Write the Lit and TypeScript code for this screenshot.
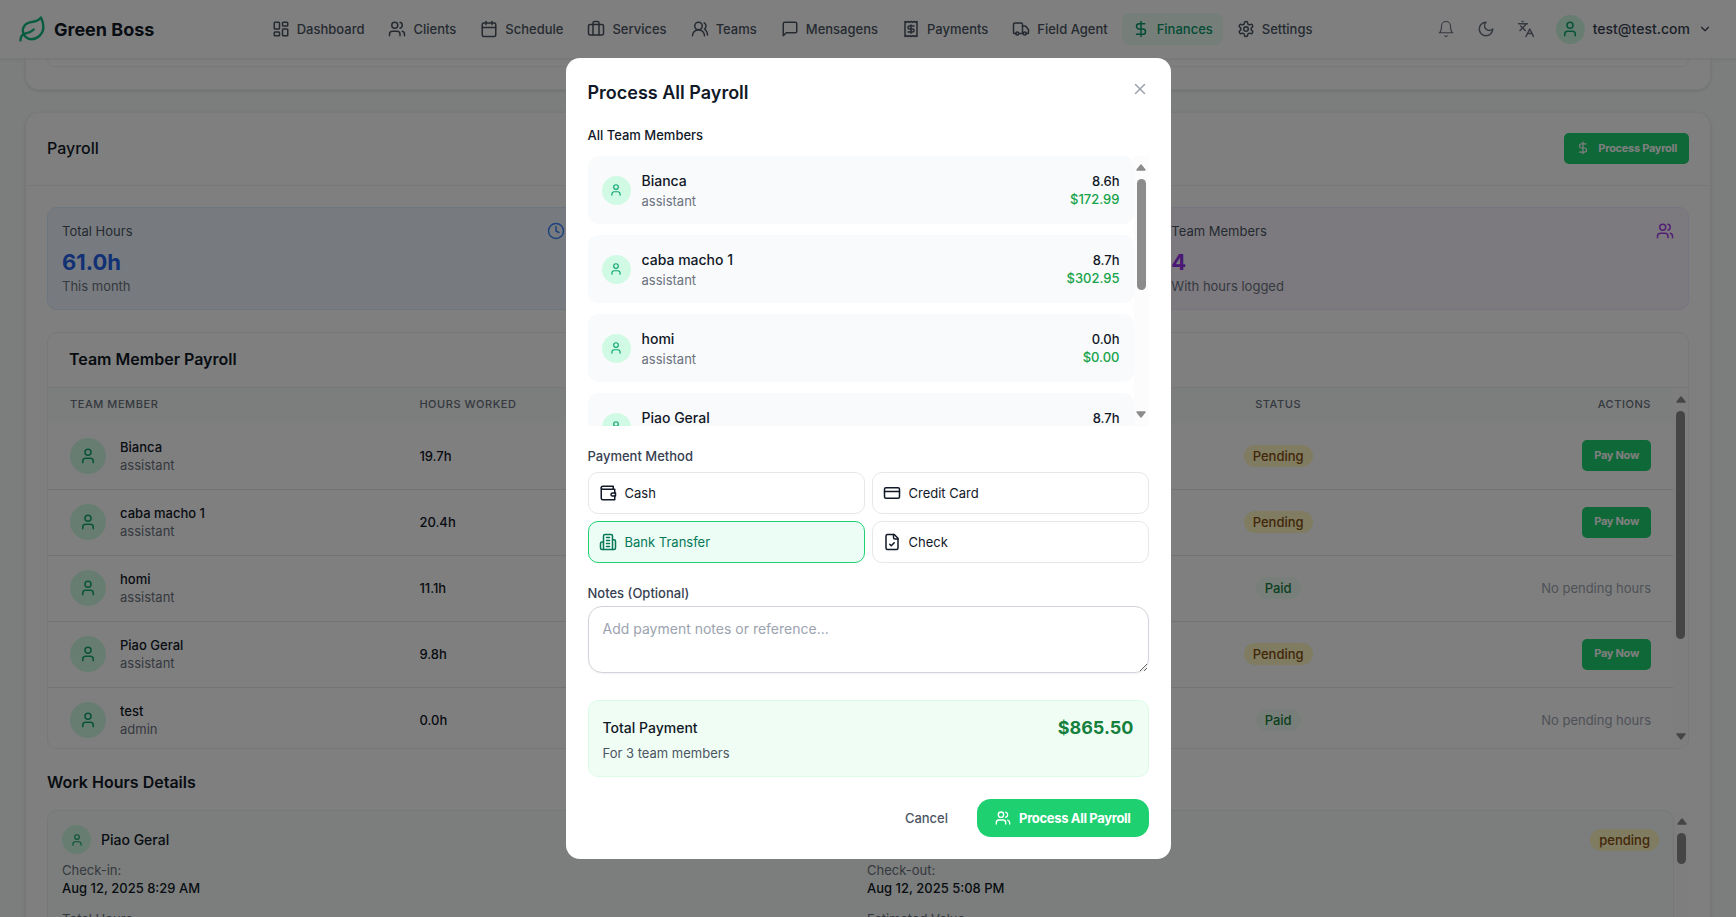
import { LitElement, html, css, svg } from "lit";
import { customElement, property, state } from "lit/decorators.js";
import { classMap } from "lit/directives/class-map.js";
import { styleMap } from "lit/directives/style-map.js";

const ICONS = {
  leaf: svg`<path d="M11 20A7 7 0 0 1 9.8 6.1C15.5 5 17 4.48 19 2c1 2 2 4.18 2 8 0 5.5-4.78 10-10 10Z"/><path d="M2 21c0-3 1.85-5.36 5.08-6C9.5 14.52 12 13 13 12"/>`,
  dashboard: svg`<rect width="7" height="9" x="3" y="3" rx="1"/><rect width="7" height="5" x="14" y="3" rx="1"/><rect width="7" height="9" x="14" y="12" rx="1"/><rect width="7" height="5" x="3" y="16" rx="1"/>`,
  users: svg`<path d="M16 21v-2a4 4 0 0 0-4-4H6a4 4 0 0 0-4 4v2"/><circle cx="9" cy="7" r="4"/><path d="M22 21v-2a4 4 0 0 0-3-3.87"/><path d="M16 3.13a4 4 0 0 1 0 7.75"/>`,
  calendar: svg`<path d="M8 2v4"/><path d="M16 2v4"/><rect width="18" height="18" x="3" y="4" rx="2"/><path d="M3 10h18"/>`,
  briefcase: svg`<path d="M16 20V4a2 2 0 0 0-2-2h-4a2 2 0 0 0-2 2v16"/><rect width="20" height="14" x="2" y="6" rx="2"/>`,
  team: svg`<path d="M18 21a8 8 0 0 0-16 0"/><circle cx="10" cy="8" r="5"/><path d="M22 20c0-3.37-2-6.5-4-8a5 5 0 0 0-.45-8.3"/>`,
  message: svg`<path d="M21 15a2 2 0 0 1-2 2H7l-4 4V5a2 2 0 0 1 2-2h14a2 2 0 0 1 2 2z"/>`,
  receipt: svg`<path d="M4 2v20l2-1 2 1 2-1 2 1 2-1 2 1 2-1 2 1V2l-2 1-2-1-2 1-2-1-2 1-2-1-2 1Z"/><path d="M16 8h-6a2 2 0 1 0 0 4h4a2 2 0 1 1 0 4H8"/><path d="M12 17.5v-11"/>`,
  truck: svg`<path d="M14 18V6a2 2 0 0 0-2-2H4a2 2 0 0 0-2 2v11a1 1 0 0 0 1 1h2"/><path d="M15 18H9"/><path d="M19 18h2a1 1 0 0 0 1-1v-3.65a1 1 0 0 0-.22-.624l-3.48-4.35A1 1 0 0 0 17.52 8H14"/><circle cx="17" cy="18" r="2"/><circle cx="7" cy="18" r="2"/>`,
  dollar: svg`<path d="M12 2v20"/><path d="M17 5H9.5a3.5 3.5 0 0 0 0 7h5a3.5 3.5 0 0 1 0 7H6"/>`,
  settings: svg`<path d="M12.22 2h-.44a2 2 0 0 0-2 2v.18a2 2 0 0 1-1 1.73l-.43.25a2 2 0 0 1-2 0l-.15-.08a2 2 0 0 0-2.73.73l-.22.38a2 2 0 0 0 .73 2.73l.15.1a2 2 0 0 1 1 1.72v.51a2 2 0 0 1-1 1.74l-.15.09a2 2 0 0 0-.73 2.73l.22.38a2 2 0 0 0 2.73.73l.15-.08a2 2 0 0 1 2 0l.43.25a2 2 0 0 1 1 1.73V20a2 2 0 0 0 2 2h.44a2 2 0 0 0 2-2v-.18a2 2 0 0 1 1-1.73l.43-.25a2 2 0 0 1 2 0l.15.08a2 2 0 0 0 2.73-.73l.22-.39a2 2 0 0 0-.73-2.73l-.15-.08a2 2 0 0 1-1-1.74v-.5a2 2 0 0 1 1-1.74l.15-.09a2 2 0 0 0 .73-2.73l-.22-.38a2 2 0 0 0-2.73-.73l-.15.08a2 2 0 0 1-2 0l-.43-.25a2 2 0 0 1-1-1.73V4a2 2 0 0 0-2-2z"/><circle cx="12" cy="12" r="3"/>`,
  bell: svg`<path d="M6 8a6 6 0 0 1 12 0c0 7 3 9 3 9H3s3-2 3-9"/><path d="M10.3 21a1.94 1.94 0 0 0 3.4 0"/>`,
  moon: svg`<path d="M12 3a6 6 0 0 0 9 9 9 9 0 1 1-9-9Z"/>`,
  languages: svg`<path d="m5 8 6 6"/><path d="m4 14 6-6 2-3"/><path d="M2 5h12"/><path d="M7 2h1"/><path d="m22 22-5-10-5 10"/><path d="M14 18h6"/>`,
  user: svg`<path d="M19 21v-2a4 4 0 0 0-4-4H9a4 4 0 0 0-4 4v2"/><circle cx="12" cy="7" r="4"/>`,
  chevron: svg`<path d="m6 9 6 6 6-6"/>`,
  clock: svg`<circle cx="12" cy="12" r="10"/><path d="M12 6v6l4 2"/>`,
  close: svg`<path d="M18 6 6 18"/><path d="m6 6 12 12"/>`,
  wallet: svg`<path d="M21 12V7H5a2 2 0 0 1 0-4h14v4"/><path d="M3 5v14a2 2 0 0 0 2 2h16v-5"/><path d="M18 12a2 2 0 0 0 0 4h4v-4Z"/>`,
  card: svg`<rect width="20" height="14" x="2" y="5" rx="2"/><path d="M2 10h20"/>`,
  building: svg`<path d="M6 22V4a2 2 0 0 1 2-2h8a2 2 0 0 1 2 2v18Z"/><path d="M6 12H4a2 2 0 0 0-2 2v6a2 2 0 0 0 2 2h2"/><path d="M18 9h2a2 2 0 0 1 2 2v9a2 2 0 0 1-2 2h-2"/><path d="M10 6h4"/><path d="M10 10h4"/><path d="M10 14h4"/><path d="M10 18h4"/>`,
  fileCheck: svg`<path d="M15 2H6a2 2 0 0 0-2 2v16a2 2 0 0 0 2 2h12a2 2 0 0 0 2-2V7Z"/><path d="M14 2v4a2 2 0 0 0 2 2h4"/><path d="m9 15 2 2 4-4"/>`,
};

type IconName = keyof typeof ICONS;

const icon = (name: IconName, size = 18, stroke = 2) => html`<svg
  class="icon"
  width=${size}
  height=${size}
  viewBox="0 0 24 24"
  fill="none"
  stroke="currentColor"
  stroke-width=${stroke}
  stroke-linecap="round"
  stroke-linejoin="round"
  aria-hidden="true"
>${ICONS[name]}</svg>`;

const NAV: { label: string; icon: IconName }[] = [
  { label: "Dashboard", icon: "dashboard" },
  { label: "Clients", icon: "users" },
  { label: "Schedule", icon: "calendar" },
  { label: "Services", icon: "briefcase" },
  { label: "Teams", icon: "team" },
  { label: "Mensagens", icon: "message" },
  { label: "Payments", icon: "receipt" },
  { label: "Field Agent", icon: "truck" },
  { label: "Finances", icon: "dollar" },
  { label: "Settings", icon: "settings" },
];

const MEMBERS = [
  { name: "Bianca", role: "assistant", hours: "19.7h", pending: true },
  { name: "caba macho 1", role: "assistant", hours: "20.4h", pending: true },
  { name: "homi", role: "assistant", hours: "11.1h", pending: false },
  { name: "Piao Geral", role: "assistant", hours: "9.8h", pending: true },
  { name: "test", role: "admin", hours: "0.0h", pending: false },
];

const PAYROLL = [
  { name: "Bianca", role: "assistant", hours: "8.6h", amount: "$172.99" },
  { name: "caba macho 1", role: "assistant", hours: "8.7h", amount: "$302.95" },
  { name: "homi", role: "assistant", hours: "0.0h", amount: "$0.00" },
  { name: "Piao Geral", role: "assistant", hours: "8.7h", amount: "$389.56" },
];

const METHODS: { id: string; label: string; icon: IconName }[] = [
  { id: "cash", label: "Cash", icon: "wallet" },
  { id: "card", label: "Credit Card", icon: "card" },
  { id: "bank", label: "Bank Transfer", icon: "building" },
  { id: "check", label: "Check", icon: "fileCheck" },
];

@customElement("scroll-track")
class ScrollTrack extends LitElement {
  @property({ type: Number }) thumb = 100;

  static styles = css`
    :host {
      display: flex;
      flex-direction: column;
      align-items: center;
      flex: none;
      box-sizing: border-box;
      width: 15px;
      padding: 8px 0;
      background: #fcfcfc;
      color: #8b8b8b;
    }
    .arrow {
      display: block;
      flex: none;
    }
    .thumb {
      width: 9px;
      margin: 8px 0 auto;
      border-radius: 5px;
      background: currentColor;
      flex: none;
    }
  `;

  render() {
    return html`
      <svg class="arrow" width="10" height="7" viewBox="0 0 10 7" aria-hidden="true">
        <path d="M5 1 9 6H1Z" fill="currentColor" stroke="currentColor" stroke-width="1.4" stroke-linejoin="round" />
      </svg>
      <div class="thumb" style=${styleMap({ height: `${this.thumb}px` })}></div>
      <svg class="arrow" width="10" height="7" viewBox="0 0 10 7" aria-hidden="true">
        <path d="M5 6 1 1H9Z" fill="currentColor" stroke="currentColor" stroke-width="1.4" stroke-linejoin="round" />
      </svg>
    `;
  }
}

@customElement("app-root")
class AppRoot extends LitElement {
  @state() private method = "bank";

  static styles = css`
    :host {
      display: flex;
      flex-direction: column;
      height: 100vh;
      overflow: hidden;
      background: #f7fcf9;
      color: #111827;
      font-family: Inter, "Liberation Sans", sans-serif;
      font-size: 13px;
      line-height: 18px;
    }
    *,
    *::before,
    *::after {
      box-sizing: border-box;
    }
    h1, h2, h3, p, ul {
      margin: 0;
      padding: 0;
    }
    ul {
      list-style: none;
    }
    button, textarea {
      font: inherit;
      color: inherit;
    }
    button {
      border: 0;
      background: none;
      padding: 0;
      cursor: pointer;
    }
    a {
      color: inherit;
      text-decoration: none;
    }
    .icon {
      display: block;
      flex: none;
    }

    /* Top bar */
    .topbar {
      display: flex;
      align-items: center;
      justify-content: space-between;
      flex: none;
      height: 59px;
      padding: 0 18px;
      background: #fff;
      border-bottom: 1px solid #f1f3f2;
      box-shadow: 0 1px 2px rgba(0, 0, 0, 0.06);
      z-index: 1;
    }
    .brand {
      display: flex;
      align-items: center;
      gap: 7px;
      font-size: 18px;
      font-weight: 700;
      line-height: 25px;
    }
    .brand .icon {
      color: #10b981;
    }
    .nav {
      display: flex;
      gap: 4px;
    }
    .nav-link {
      display: flex;
      align-items: center;
      gap: 7px;
      height: 32px;
      padding: 0 10px;
      border-radius: 7px;
      font-weight: 500;
      color: #4b5563;
      white-space: nowrap;
    }
    .nav-link.active {
      background: #ecfdf5;
      color: #059669;
    }
    .tools {
      display: flex;
      align-items: center;
      gap: 8px;
      color: #6b7280;
    }
    .tool {
      padding: 7px;
    }
    .account {
      display: flex;
      align-items: center;
      gap: 8px;
      padding: 0 6px;
      font-size: 14px;
      font-weight: 500;
      color: #374151;
    }
    .avatar {
      display: grid;
      place-items: center;
      flex: none;
      width: 29px;
      height: 29px;
      border-radius: 50%;
      background: #d1fae5;
      color: #10a674;
    }
    .avatar.large {
      width: 36px;
      height: 36px;
    }

    /* Page */
    .page {
      display: flex;
      flex-direction: column;
      gap: 22px;
      flex: 1;
      min-height: 0;
      padding: 0 25px;
      overflow: hidden;
    }
    .panel {
      flex: none;
      background: #fff;
      border: 1px solid #f1f3f2;
      border-radius: 14px;
      box-shadow: 0 1px 3px rgba(0, 0, 0, 0.12);
    }
    .panel.previous {
      padding: 0 21px 22px;
      border-top: 0;
      border-radius: 0 0 14px 14px;
    }
    .previous-list {
      height: 8px;
      border: 1px solid #eef0ef;
      border-top: 0;
      border-radius: 0 0 10px 10px;
    }
    .panel-head {
      display: flex;
      align-items: center;
      justify-content: space-between;
      padding: 20px 21px 21px;
      border-bottom: 1px solid #f0f1f1;
    }
    .panel-body {
      padding: 21px;
    }
    .heading {
      font-size: 16px;
      font-weight: 600;
      line-height: 25px;
    }
    .panel-title {
      font-weight: 500;
    }
    .btn {
      display: inline-flex;
      align-items: center;
      justify-content: center;
      gap: 8px;
      height: 31px;
      padding: 0 12px 2px;
      border-radius: 5px;
      background: #1fd071;
      color: #fff;
      font-size: 11px;
      font-weight: 700;
      letter-spacing: -0.025em;
      white-space: nowrap;
    }
    .stats {
      display: grid;
      grid-template-columns: repeat(3, 1fr);
      gap: 22px;
    }
    .stat {
      min-height: 103px;
      padding: 14px;
      border: 1px solid #dbeafe;
      border-radius: 10px;
      background: #eff6ff;
    }
    .stat.green {
      border-color: #dcfce7;
      background: #f0fdf4;
    }
    .stat.purple {
      border-color: #f0e6fe;
      background: #faf5ff;
    }
    .stat-top {
      display: flex;
      justify-content: space-between;
      margin-bottom: 7px;
      color: #4b5563;
    }
    .stat-top .icon {
      color: #3b82f6;
    }
    .purple .icon {
      color: #a33de8;
    }
    .stat-value {
      font-size: 22px;
      font-weight: 700;
      line-height: 30px;
      color: #2563eb;
    }
    .purple .stat-value {
      color: #9333ea;
    }
    .muted {
      color: #6b7280;
    }

    /* Team table */
    .table-card {
      margin: 22px 0 21px;
      border: 1px solid #eef0ef;
      border-radius: 10px;
      overflow: hidden;
    }
    .table-title {
      padding: 14px 21px 15px;
      border-bottom: 1px solid #eef0ef;
    }
    .table-scroll {
      display: flex;
      height: 360px;
      overflow: hidden;
    }
    .table-wrap {
      flex: 1;
      min-width: 0;
    }
    table {
      width: 100%;
      border-collapse: collapse;
      table-layout: fixed;
    }
    th {
      height: 35px;
      padding: 0 22px 2px;
      background: #f7fcf9;
      font-size: 11px;
      font-weight: 500;
      line-height: 15px;
      letter-spacing: 0.05em;
      text-align: left;
      text-transform: uppercase;
      color: #6b7280;
    }
    td {
      height: 66px;
      padding: 0 22px;
      border-bottom: 1px solid #e5e7eb;
      font-weight: 500;
    }
    th.center, td.center {
      text-align: center;
    }
    th.right, td.right {
      text-align: right;
    }
    .col-member { width: 21.5%; }
    .col-hours { width: 20%; }
    .col-pay { width: 28.7%; }
    .col-status { width: 11%; }
    .member {
      display: flex;
      align-items: center;
      gap: 14px;
    }
    .member .muted {
      font-weight: 400;
    }
    .badge {
      display: inline-block;
      padding: 2px 9px;
      border-radius: 11px;
      background: #f0fdf4;
      color: #15803d;
      font-weight: 500;
    }
    .badge.pending {
      background: #fef9c3;
      color: #854d0e;
    }
    .none {
      font-weight: 400;
      color: #9ca3af;
    }

    /* Work hours */
    .hours-scroll {
      display: flex;
      height: 270px;
      margin-top: 15px;
      overflow: hidden;
    }
    .entries {
      flex: 1;
    }
    .entry {
      padding: 14px;
      border: 1px solid #edf0ee;
      border-radius: 10px;
      background: #f7fcf9;
    }
    .entry-head {
      display: flex;
      align-items: center;
      justify-content: space-between;
      margin-bottom: 7px;
    }
    .entry-name {
      display: flex;
      align-items: center;
      gap: 10px;
      font-size: 14px;
      font-weight: 500;
    }
    .facts {
      display: grid;
      grid-template-columns: 1fr 1fr;
      gap: 13px;
    }
    .strong {
      font-weight: 500;
    }

    /* Dialog */
    .overlay {
      position: fixed;
      inset: 0;
      z-index: 10;
      display: grid;
      place-items: center;
      background: rgba(0, 0, 0, 0.5);
    }
    .dialog {
      width: 605px;
      max-width: calc(100% - 32px);
      padding: 22px;
      border-radius: 14px;
      background: #fff;
    }
    .dialog-head {
      display: flex;
      align-items: flex-start;
      justify-content: space-between;
      margin-bottom: 21px;
    }
    .dialog-title {
      font-size: 18px;
      font-weight: 600;
      line-height: 25px;
    }
    .close {
      color: #9ca3af;
    }
    .sub-title {
      margin-bottom: 12px;
      font-size: 13px;
      font-weight: 500;
    }
    .list-scroll {
      display: flex;
      height: 270px;
      margin-bottom: 21px;
      overflow: hidden;
    }
    .list {
      display: flex;
      flex-direction: column;
      gap: 11px;
      flex: 1;
    }
    .person {
      display: flex;
      align-items: center;
      justify-content: space-between;
      flex: none;
      padding: 14px;
      border-radius: 10px;
      background: #f9fafb;
    }
    .person-info {
      display: flex;
      align-items: center;
      gap: 11px;
    }
    .person-name {
      font-size: 14px;
      font-weight: 500;
      line-height: 22px;
    }
    .person-pay {
      text-align: right;
      font-weight: 500;
    }
    .amount {
      color: #16a34a;
    }
    .field-label {
      display: block;
      margin-bottom: 7px;
      font-weight: 500;
      color: #374151;
    }
    .methods {
      display: grid;
      grid-template-columns: 1fr 1fr;
      gap: 7px;
      margin-bottom: 21px;
    }
    .method {
      display: flex;
      align-items: center;
      gap: 8px;
      height: 42px;
      padding: 0 10px;
      border: 1px solid #e5e7eb;
      border-radius: 10px;
      font-weight: 400;
    }
    .method.selected {
      border-color: #1fd071;
      background: #ecfdf5;
      color: #047857;
    }
    .notes-label {
      margin-bottom: 4px;
    }
    .notes {
      display: block;
      width: 100%;
      height: 67px;
      margin-bottom: 27px;
      padding: 11px 14px;
      border: 1px solid #d1d5db;
      border-radius: 14px;
      background: #fff;
      box-shadow: 0 1px 2px rgba(0, 0, 0, 0.05);
      font-size: 14px;
      line-height: 22px;
      outline: none;
      resize: vertical;
    }
    .notes::placeholder {
      color: #9ca3af;
    }
    .total {
      margin-bottom: 22px;
      padding: 14px;
      border: 1px solid #dcfce7;
      border-radius: 10px;
      background: #f0fdf4;
    }
    .total-row {
      display: flex;
      align-items: center;
      justify-content: space-between;
      margin-bottom: 4px;
      font-size: 14px;
      font-weight: 500;
      line-height: 25px;
    }
    .total-value {
      font-size: 18px;
      font-weight: 700;
      color: #15803d;
    }
    .total-note {
      color: #4b5563;
    }
    .actions {
      display: flex;
      justify-content: flex-end;
      gap: 11px;
    }
    .cancel {
      padding: 0 18px;
      font-weight: 500;
      color: #4b5563;
    }
    .submit {
      height: 38px;
      padding: 0 18px;
      border-radius: 14px;
      font-size: 13px;
    }
  `;

  private renderTopbar() {
    return html`
      <header class="topbar">
        <a class="brand" href="#">${icon("leaf", 29)}<span>Green Boss</span></a>
        <nav class="nav" aria-label="Main">
          ${NAV.map(
            (item) => html`<a
              class=${classMap({ "nav-link": true, active: item.label === "Finances" })}
              href="#"
              >${icon(item.icon)}<span>${item.label}</span></a
            >`,
          )}
        </nav>
        <div class="tools">
          <button class="tool" aria-label="Notifications">${icon("bell", 18, 1.5)}</button>
          <button class="tool" aria-label="Dark mode">${icon("moon")}</button>
          <button class="tool" aria-label="Language">${icon("languages")}</button>
          <button class="account">
            <span class="avatar">${icon("user")}</span>
            <span>test@test.com</span>
            ${icon("chevron", 14)}
          </button>
        </div>
      </header>
    `;
  }

  private renderStats() {
    return html`
      <div class="stats">
        <section class="stat">
          <div class="stat-top"><span>Total Hours</span>${icon("clock")}</div>
          <p class="stat-value">61.0h</p>
          <p class="muted">This month</p>
        </section>
        <section class="stat green"></section>
        <section class="stat purple">
          <div class="stat-top"><span>Team Members</span>${icon("users")}</div>
          <p class="stat-value">4</p>
          <p class="muted">With hours logged</p>
        </section>
      </div>
    `;
  }

  private renderTable() {
    return html`
      <section class="table-card">
        <h3 class="heading table-title">Team Member Payroll</h3>
        <div class="table-scroll">
          <div class="table-wrap">
            <table>
              <thead>
                <tr>
                  <th class="col-member">Team Member</th>
                  <th class="col-hours">Hours Worked</th>
                  <th class="col-pay"></th>
                  <th class="col-status center">Status</th>
                  <th class="right">Actions</th>
                </tr>
              </thead>
              <tbody>
                ${MEMBERS.map(
                  (m) => html`<tr>
                    <td>
                      <div class="member">
                        <span class="avatar large">${icon("user")}</span>
                        <div>
                          <p>${m.name}</p>
                          <p class="muted">${m.role}</p>
                        </div>
                      </div>
                    </td>
                    <td>${m.hours}</td>
                    <td></td>
                    <td class="center">
                      <span class=${classMap({ badge: true, pending: m.pending })}
                        >${m.pending ? "Pending" : "Paid"}</span
                      >
                    </td>
                    <td class="right">
                      ${m.pending
                        ? html`<button class="btn">Pay Now</button>`
                        : html`<span class="none">No pending hours</span>`}
                    </td>
                  </tr>`,
                )}
              </tbody>
            </table>
          </div>
          <scroll-track .thumb=${228}></scroll-track>
        </div>
      </section>
    `;
  }

  private renderWorkHours() {
    return html`
      <h3 class="heading">Work Hours Details</h3>
      <div class="hours-scroll">
        <div class="entries">
          <article class="entry">
            <div class="entry-head">
              <div class="entry-name">
                <span class="avatar">${icon("user", 14)}</span><span>Piao Geral</span>
              </div>
              <span class="badge pending">pending</span>
            </div>
            <div class="facts">
              <div><p class="muted">Check-in:</p><p class="strong">Aug 12, 2025 8:29 AM</p></div>
              <div><p class="muted">Check-out:</p><p class="strong">Aug 12, 2025 5:08 PM</p></div>
              <div><p class="muted">Total Hours:</p><p class="strong">8.7h</p></div>
              <div><p class="muted">Estimated Value:</p><p class="strong">$389.56</p></div>
            </div>
          </article>
        </div>
        <scroll-track .thumb=${31}></scroll-track>
      </div>
    `;
  }

  private renderDialog() {
    return html`
      <div class="overlay">
        <div class="dialog" role="dialog" aria-modal="true" aria-labelledby="dialog-title">
          <div class="dialog-head">
            <h2 class="dialog-title" id="dialog-title">Process All Payroll</h2>
            <button class="close" aria-label="Close">${icon("close")}</button>
          </div>
          <h3 class="sub-title">All Team Members</h3>
          <div class="list-scroll">
            <ul class="list">
              ${PAYROLL.map(
                (p) => html`<li class="person">
                  <div class="person-info">
                    <span class="avatar">${icon("user", 14)}</span>
                    <div>
                      <p class="person-name">${p.name}</p>
                      <p class="muted">${p.role}</p>
                    </div>
                  </div>
                  <div class="person-pay">
                    <p>${p.hours}</p>
                    <p class="amount">${p.amount}</p>
                  </div>
                </li>`,
              )}
            </ul>
            <scroll-track .thumb=${111}></scroll-track>
          </div>
          <span class="field-label" id="method-label">Payment Method</span>
          <div class="methods" role="group" aria-labelledby="method-label">
            ${METHODS.map(
              (m) => html`<button
                class=${classMap({ method: true, selected: this.method === m.id })}
                aria-pressed=${this.method === m.id ? "true" : "false"}
                @click=${() => (this.method = m.id)}
              >
                ${icon(m.icon)}<span>${m.label}</span>
              </button>`,
            )}
          </div>
          <label class="field-label notes-label" for="notes">Notes (Optional)</label>
          <textarea class="notes" id="notes" placeholder="Add payment notes or reference..."></textarea>
          <section class="total">
            <div class="total-row">
              <span>Total Payment</span><span class="total-value">$865.50</span>
            </div>
            <p class="total-note">For 3 team members</p>
          </section>
          <div class="actions">
            <button class="cancel">Cancel</button>
            <button class="btn submit">${icon("users", 16)}<span>Process All Payroll</span></button>
          </div>
        </div>
      </div>
    `;
  }

  render() {
    return html`
      ${this.renderTopbar()}
      <main class="page">
        <section class="panel previous"><div class="previous-list"></div></section>
        <section class="panel">
          <div class="panel-head">
            <h2 class="heading panel-title">Payroll</h2>
            <button class="btn">${icon("dollar", 14)}<span>Process Payroll</span></button>
          </div>
          <div class="panel-body">
            ${this.renderStats()} ${this.renderTable()} ${this.renderWorkHours()}
          </div>
        </section>
      </main>
      ${this.renderDialog()}
    `;
  }
}
